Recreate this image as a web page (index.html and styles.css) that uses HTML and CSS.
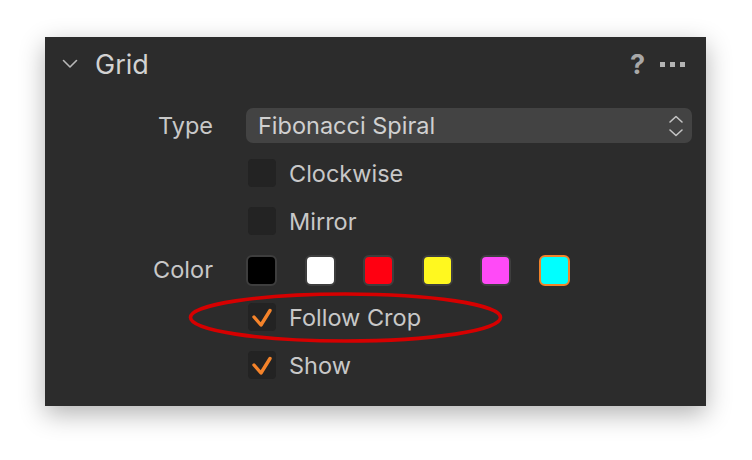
FILE: index.html
```html
<!DOCTYPE html>
<html lang="en">
  <head>
    <meta charset="UTF-8" />
    <title>Grid</title>
    <link rel="stylesheet" href="styles.css">
  </head>
  <body>
    <div class="panel">
      <div class="panel-header">
        <svg class="chevron" width="16" height="10" viewBox="0 0 16 10">
          <path d="M1.5 1.5 L8 8 L14.5 1.5" fill="none" stroke="#b8b8b8" stroke-width="1.6" stroke-linecap="round" stroke-linejoin="round" />
        </svg>
        <span class="title">Grid</span>
        <span class="help">?</span>
        <span class="more"><i></i><i></i><i></i></span>
      </div>

      <div class="rows">
        <div class="label">Type</div>
        <div class="select">
          <span>Fibonacci Spiral</span>
          <svg class="stepper" width="16" height="22" viewBox="0 0 16 22">
            <path d="M2 7 L8 1.5 L14 7 M2 15 L8 20.5 L14 15" fill="none" stroke="#c4c4c4" stroke-width="1.6" stroke-linecap="round" stroke-linejoin="round" />
          </svg>
        </div>

        <div class="label"></div>
        <label class="check"><span class="box"></span>Clockwise</label>

        <div class="label"></div>
        <label class="check"><span class="box"></span>Mirror</label>

        <div class="label">Color</div>
        <div class="swatches">
          <span class="swatch" style="background: #000000"></span>
          <span class="swatch" style="background: #ffffff"></span>
          <span class="swatch" style="background: #ff0011"></span>
          <span class="swatch" style="background: #fff81f"></span>
          <span class="swatch" style="background: #ff4af7"></span>
          <span class="swatch selected" style="background: #00ffff"></span>
        </div>

        <div class="label"></div>
        <label class="check">
          <span class="box">
            <svg width="28" height="28" viewBox="0 0 28 28"><path d="M6 14 L13 22 L22 7.5" fill="none" stroke="#f5832a" stroke-width="3.4" stroke-linecap="round" stroke-linejoin="round" /></svg>
          </span>Follow Crop
        </label>

        <div class="label"></div>
        <label class="check">
          <span class="box">
            <svg width="28" height="28" viewBox="0 0 28 28"><path d="M6 14 L13 22 L22 7.5" fill="none" stroke="#f5832a" stroke-width="3.4" stroke-linecap="round" stroke-linejoin="round" /></svg>
          </span>Show
        </label>
      </div>

      <!-- hand-drawn marker around the Follow Crop option -->
      <svg class="marker" width="661" height="369" viewBox="0 0 661 369">
        <ellipse cx="300.5" cy="280.5" rx="155" ry="23.5" fill="none" stroke="#d60000" stroke-width="3.6" />
      </svg>
    </div>
  </body>
</html>
```

FILE: styles.css
```css
html {
  background: #ffffff;
}

body {
  box-sizing: border-box;
  min-height: 100vh;
  margin: 0;
  padding: 37px 0 0 45px;
  font-family: "Inter", "Liberation Sans", sans-serif;
}

.panel {
  position: relative;
  box-sizing: border-box;
  width: 661px;
  height: 369px;
  background: #2c2c2c;
  box-shadow: 0 8px 24px rgba(0, 0, 0, 0.3);
}

.panel-header {
  display: flex;
  align-items: center;
  height: 54px;
  padding: 0 21px 0 17px;
}

.chevron {
  margin-right: 17px;
}

.title {
  flex: 1;
  font-size: 27px;
  color: #d2d2d2;
}

.help {
  font-size: 27px;
  font-weight: bold;
  color: #a8a8a8;
  margin-right: 15px;
}

.more {
  display: flex;
  gap: 5px;
}

.more i {
  width: 5px;
  height: 5px;
  background: #b4b4b4;
}

.rows {
  display: grid;
  grid-template-columns: 156px 1fr;
  grid-auto-rows: 48px;
  column-gap: 33px;
  align-items: center;
  padding: 10px 14px 16px 12px;
  font-size: 23.5px;
  color: #c8c8c8;
}

.label {
  text-align: right;
}

.select {
  display: flex;
  align-items: center;
  justify-content: space-between;
  height: 35px;
  margin-top: 1px;
  padding: 0 8px 0 12px;
  background: #434343;
  border-radius: 7px;
  color: #d0d0d0;
}

.check {
  display: flex;
  align-items: center;
  gap: 13px;
  margin-left: 2px;
}

.box {
  display: block;
  width: 28px;
  height: 28px;
  background: #232323;
  border-radius: 4px;
}

.box svg {
  display: block;
}

.swatches {
  display: flex;
  gap: 27.6px;
  margin-top: 2px;
}

.swatch {
  box-sizing: border-box;
  width: 31px;
  height: 31px;
  border: 2px solid #3e3e3e;
  border-radius: 6px;
}

.swatch.selected {
  border-color: #f2822a;
}

.marker {
  position: absolute;
  top: 0;
  left: 0;
  pointer-events: none;
}
```
